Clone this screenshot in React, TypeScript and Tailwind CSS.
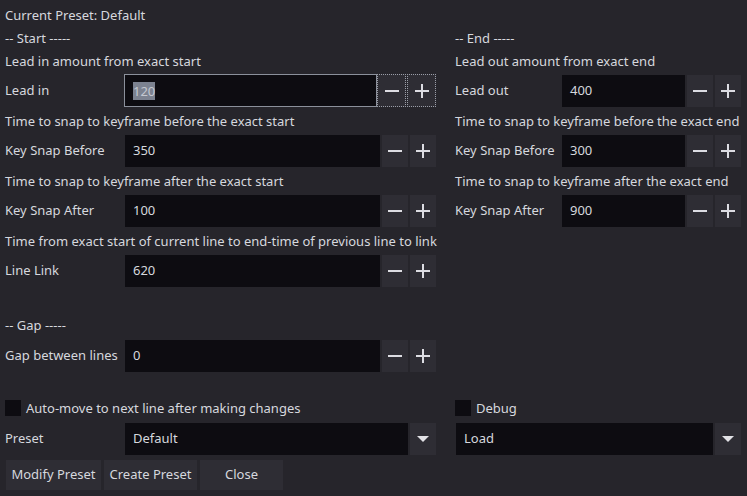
import React from "react";

const label = "h-[18px] leading-[18px] whitespace-nowrap";

function Minus() {
  return (
    <svg width="14" height="14" viewBox="0 0 14 14">
      <rect x="0" y="6" width="14" height="2" fill="#dcdce2" />
    </svg>
  );
}

function Plus() {
  return (
    <svg width="14" height="14" viewBox="0 0 14 14">
      <rect x="0" y="6" width="14" height="2" fill="#dcdce2" />
      <rect x="6" y="0" width="2" height="14" fill="#dcdce2" />
    </svg>
  );
}

function SpinRow({
  name,
  value,
  labelW,
  focused,
}: {
  name: string;
  value: string;
  labelW: string;
  focused?: boolean;
}) {
  if (focused) {
    return (
      <div className="flex h-[32px] items-stretch">
        <div className={`${labelW} flex shrink-0 items-center`}>{name}</div>
        <div className="-ml-[1px] -mt-[1px] flex h-[33px] flex-1 items-center border border-[#8b909b] bg-[#0d0c11] pl-[8px]">
          <span className="bg-[#7c8290] leading-[18px] text-[#c4c8d0]">{value}</span>
        </div>
        <button className="-mt-[1px] flex h-[33px] w-[29px] items-center justify-center border border-dotted border-[#9a9ea8] bg-[#2e2d34]">
          <Minus />
        </button>
        <button className="-mt-[1px] ml-[1px] flex h-[33px] w-[29px] items-center justify-center border border-dotted border-[#9a9ea8] bg-[#2e2d34]">
          <Plus />
        </button>
      </div>
    );
  }
  return (
    <div className="flex h-[32px] items-stretch">
      <div className={`${labelW} flex shrink-0 items-center`}>{name}</div>
      <div className="flex flex-1 items-center bg-[#0d0c11] pl-[8px]">{value}</div>
      <button className="ml-[2px] flex w-[26px] items-center justify-center bg-[#2e2d34]">
        <Minus />
      </button>
      <button className="ml-[2px] flex w-[26px] items-center justify-center bg-[#2e2d34]">
        <Plus />
      </button>
    </div>
  );
}

function Arrow() {
  return (
    <svg width="12" height="6" viewBox="0 0 12 6">
      <polygon points="0,0 12,0 6,6" fill="#e2e2e6" />
    </svg>
  );
}

function Check({ text }: { text: string }) {
  return (
    <div className="flex h-[20px] items-center gap-[5px]">
      <div className="h-[16px] w-[16px] bg-[#0d0c11]" />
      <span className="leading-[18px]">{text}</span>
    </div>
  );
}

export default function App() {
  return (
    <div className="h-[496px] w-[747px] overflow-hidden bg-[#26252b] font-['Noto_Sans',sans-serif] text-[13px] text-[#d6d8de]">
      <div className="grid grid-cols-[431px_286px] gap-x-[19px] gap-y-[5px] pl-[5px] pt-[6px]">
        <div className={`${label} col-span-2`}>Current Preset: Default</div>

        <div className={label}>-- Start -----</div>
        <div className={label}>-- End -----</div>

        <div className={label}>Lead in amount from exact start</div>
        <div className={label}>Lead out amount from exact end</div>

        <SpinRow name="Lead in" value="120" labelW="w-[120px]" focused />
        <SpinRow name="Lead out" value="400" labelW="w-[107px]" />

        <div className={label}>Time to snap to keyframe before the exact start</div>
        <div className={label}>Time to snap to keyframe before the exact end</div>

        <SpinRow name="Key Snap Before" value="350" labelW="w-[120px]" />
        <SpinRow name="Key Snap Before" value="300" labelW="w-[107px]" />

        <div className={label}>Time to snap to keyframe after the exact start</div>
        <div className={label}>Time to snap to keyframe after the exact end</div>

        <SpinRow name="Key Snap After" value="100" labelW="w-[120px]" />
        <SpinRow name="Key Snap After" value="900" labelW="w-[107px]" />

        <div className={`${label} col-span-2`}>
          Time from exact start of current line to end-time of previous line to link
        </div>

        <SpinRow name="Line Link" value="620" labelW="w-[120px]" />
        <div />

        <div className="col-span-2 h-[19px]" />

        <div className={`${label} col-span-2`}>-- Gap -----</div>

        <div className="mt-[1px]">
          <SpinRow name="Gap between lines" value="0" labelW="w-[120px]" />
        </div>
        <div />

        <div className="col-span-2 h-[16px]" />

        <Check text="Auto-move to next line after making changes" />
        <Check text="Debug" />

        <div className="flex h-[32px] items-stretch">
          <div className="flex w-[120px] shrink-0 items-center">Preset</div>
          <div className="flex flex-1 items-center bg-[#0d0c11] pl-[8px]">Default</div>
          <div className="ml-[2px] flex w-[26px] items-center justify-center bg-[#2e2d34]">
            <Arrow />
          </div>
        </div>
        <div className="ml-[1px] flex h-[32px] items-stretch">
          <div className="flex flex-1 items-center bg-[#0d0c11] pl-[8px]">Load</div>
          <div className="ml-[2px] flex w-[26px] items-center justify-center bg-[#2e2d34]">
            <Arrow />
          </div>
        </div>

        <div className="col-span-2 ml-[1px] flex h-[30px] gap-[3px]">
          <button className="w-[95px] bg-[#2e2d34]">Modify Preset</button>
          <button className="w-[93px] bg-[#2e2d34]">Create Preset</button>
          <button className="w-[83px] bg-[#2e2d34]">Close</button>
        </div>
      </div>
    </div>
  );
}
